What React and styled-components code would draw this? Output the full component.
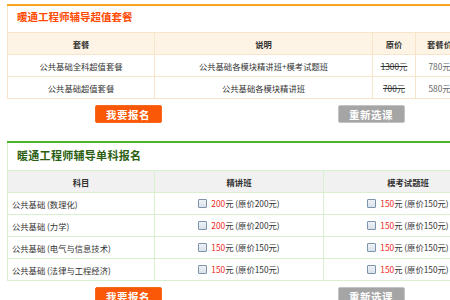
import React from "react";
import styled, { createGlobalStyle } from "styled-components";

const Global = createGlobalStyle`
  html, body { margin: 0; padding: 0; background: #fff; }
  body { font-family: "Noto Sans CJK SC", "Noto Sans", sans-serif; }
`;

const Frame = styled.div`
  width: 450px;
  height: 300px;
  overflow: hidden;
  background: #fff;
`;

const Page = styled.div`
  width: 485px;
  padding: 4px 0 0 7px;
`;

const Section = styled.div`
  border-top: 2px solid ${(p) => p.$line};
  margin-top: ${(p) => p.$top || 0}px;
`;

const Title = styled.div`
  height: ${(p) => p.$h}px;
  line-height: ${(p) => p.$lh}px;
  padding-left: 9px;
  border-left: 1px solid ${(p) => p.$border};
  font-size: ${(p) => p.$size}px;
  font-weight: bold;
  color: ${(p) => p.$color};
  letter-spacing: ${(p) => p.$ls || 0}px;
  box-sizing: border-box;
`;

const Table = styled.table`
  border-collapse: separate;
  border-spacing: 0;
  table-layout: fixed;
  width: ${(p) => p.$w}px;
  border-top: 1px solid ${(p) => p.$border};
  border-left: 1px solid ${(p) => p.$border};
  font-size: 8.3px;
  line-height: 10px;
  color: #333;
`;

const Th = styled.th`
  box-sizing: border-box;
  height: 22px;
  padding: 0;
  font-weight: bold;
  background: ${(p) => p.$bg};
  border-right: 1px solid ${(p) => p.$border};
  border-bottom: 1px solid ${(p) => p.$border};
  text-align: center;
`;

const Td = styled.td`
  box-sizing: border-box;
  height: 22px;
  padding: 0 ${(p) => (p.$left ? "4px" : "0")};
  border-right: 1px solid ${(p) => p.$border};
  border-bottom: 1px solid ${(p) => p.$border};
  text-align: ${(p) => (p.$left ? "left" : "center")};
  color: ${(p) => p.$color || "#333"};
  white-space: nowrap;
`;

const Strike = styled.span`
  text-decoration: line-through;
  color: #333;
`;

const Buttons = styled.div`
  width: 485px;
  display: flex;
  justify-content: center;
  gap: 176px;
  margin-top: 6px;
`;

const Button = styled.div`
  width: 67px;
  height: 18px;
  box-sizing: border-box;
  border-radius: 2px;
  display: flex;
  align-items: center;
  justify-content: center;
  font-size: 10.5px;
  font-weight: bold;
  color: #fff;
  letter-spacing: 0.5px;
  background: ${(p) => (p.$gray ? "#a5a5a5" : "#fa5807")};
  border: 1px solid ${(p) => (p.$gray ? "#c4c4c4" : "#f56a1e")};
`;

const Choice = styled.span`
  display: inline-flex;
  align-items: center;
  gap: 4px;
`;

const Box = styled.span`
  width: 7px;
  height: 7px;
  border: 1px solid #7d93aa;
  background: linear-gradient(#eef2f6, #d9e1ea);
  border-radius: 1px;
  display: inline-block;
`;

const Red = styled.span`
  color: #ee1c1c;
`;

const O = "#f6e4cb";
const G = "#d8efd0";

const packs = [
  ["公共基础全科超值套餐", "公共基础各模块精讲班+模考试题班", "1300元", "780元"],
  ["公共基础超值套餐", "公共基础各模块精讲班", "700元", "580元"],
];

const subjects = [
  ["公共基础 (数理化)", "200", "200", "150", "150"],
  ["公共基础 (力学)", "200", "200", "150", "150"],
  ["公共基础 (电气与信息技术)", "150", "150", "150", "150"],
  ["公共基础 (法律与工程经济)", "150", "150", "150", "150"],
];

const Price = ({ now, orig }) => (
  <Choice>
    <Box />
    <span>
      <Red>{now}</Red>元 (原价{orig}元)
    </span>
  </Choice>
);

export default function App() {
  return (
    <Frame>
      <Global />
      <Page>
        <Section $line="#f6a820">
          <Title $h={26} $lh={22} $size={10.5} $color="#ff4a00" $border={O}>
            暖通工程师辅导超值套餐
          </Title>
          <Table $w={456} $border={O}>
            <colgroup>
              <col style={{ width: 147 }} />
              <col style={{ width: 218 }} />
              <col style={{ width: 43 }} />
              <col style={{ width: 48 }} />
            </colgroup>
            <thead>
              <tr>
                <Th $bg="#fdf4e5" $border={O}>套餐</Th>
                <Th $bg="#fdf4e5" $border={O}>说明</Th>
                <Th $bg="#fdf4e5" $border={O}>原价</Th>
                <Th $bg="#fdf4e5" $border={O}>套餐价</Th>
              </tr>
            </thead>
            <tbody>
              {packs.map((r) => (
                <tr key={r[0]}>
                  <Td $border={O}>{r[0]}</Td>
                  <Td $border={O}>{r[1]}</Td>
                  <Td $border={O}><Strike>{r[2]}</Strike></Td>
                  <Td $border={O} $color="#666">{r[3]}</Td>
                </tr>
              ))}
            </tbody>
          </Table>
        </Section>
        <Buttons>
          <Button>我要报名</Button>
          <Button $gray>重新选课</Button>
        </Buttons>

        <Section $line="#4db228" $top={18}>
          <Title $h={27} $lh={25} $size={11} $color="#2b5e12" $border={G} $ls={0.3}>
            暖通工程师辅导单科报名
          </Title>
          <Table $w={485} $border={G}>
            <colgroup>
              <col style={{ width: 147 }} />
              <col style={{ width: 169 }} />
              <col style={{ width: 169 }} />
            </colgroup>
            <thead>
              <tr>
                <Th $bg="#f1f1f1" $border={G}>科目</Th>
                <Th $bg="#f1f1f1" $border={G}>精讲班</Th>
                <Th $bg="#f1f1f1" $border={G}>模考试题班</Th>
              </tr>
            </thead>
            <tbody>
              {subjects.map((r) => (
                <tr key={r[0]}>
                  <Td $border={G} $left>{r[0]}</Td>
                  <Td $border={G}><Price now={r[1]} orig={r[2]} /></Td>
                  <Td $border={G}><Price now={r[3]} orig={r[4]} /></Td>
                </tr>
              ))}
            </tbody>
          </Table>
        </Section>
        <Buttons>
          <Button>我要报名</Button>
          <Button $gray>重新选课</Button>
        </Buttons>
      </Page>
    </Frame>
  );
}
